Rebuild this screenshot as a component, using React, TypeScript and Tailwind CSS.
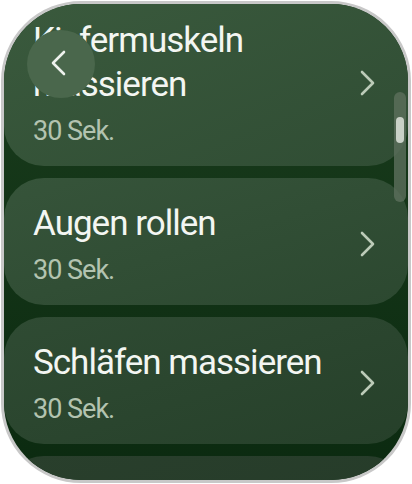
const items = [
  { title: "Kiefermuskeln massieren", time: "30 Sek.", bg: "from-[#3a5a3d] to-[#304d34]" },
  { title: "Augen rollen", time: "30 Sek.", bg: "from-[#36543a] to-[#2c4830]" },
  { title: "Schläfen massieren", time: "30 Sek.", bg: "from-[#2f4b33] to-[#26402a]" },
];

const Chevron = ({ dir }: { dir: "left" | "right" }) => (
  <svg width="16" height="28" viewBox="0 0 16 28" fill="none">
    <polyline
      points={dir === "right" ? "3,3 14,14 3,25" : "13,3 2,14 13,25"}
      stroke="currentColor"
      strokeWidth="2.6"
      strokeLinecap="round"
      strokeLinejoin="round"
    />
  </svg>
);

export default function App() {
  return (
    <div className="w-[412px] h-[484px] bg-white p-[1px]" style={{ fontFamily: "Roboto, 'Noto Sans', sans-serif" }}>
      <div className="relative h-full w-full overflow-hidden rounded-[80px] border-[3px] border-[#c8c8c8] bg-gradient-to-b from-[#1b3e1e] to-[#0b2a10]">
        {/* list */}
        <div className="-mt-[9px] flex flex-col gap-[12px]">
          {items.map((it) => (
            <div
              key={it.title}
              className={`flex items-center justify-between rounded-[40px] bg-gradient-to-br ${it.bg} pl-[29px] pr-[33px] pt-[24px] pb-[19px]`}
            >
              <div className="w-[318px]">
                <div className="text-[35px] leading-[44px] tracking-[-1px] text-[#f3f6f2]">{it.title}</div>
                <div className="mt-[8px] text-[27px] leading-[32px] tracking-[-1px] text-[#b3c3b0]">{it.time}</div>
              </div>
              <div className="text-[#bccbb8]">
                <Chevron dir="right" />
              </div>
            </div>
          ))}
          {/* next item, scrolled below the screen edge */}
          <div className="h-[127px] rounded-[40px] bg-gradient-to-br from-[#293f2c] to-[#243a28]" />
        </div>

        {/* back button */}
        <div className="absolute left-[23px] top-[26px] flex h-[68px] w-[68px] items-center justify-center rounded-full bg-[#4a674c] text-[#eef2ed]">
          <div className="-ml-[4px] -mt-[3px]">
            <Chevron dir="left" />
          </div>
        </div>

        {/* scrollbar */}
        <div className="absolute right-[2px] top-[88px] h-[110px] w-[12px] rounded-full bg-[#5d6f5d]/80">
          <div className="ml-[2px] mt-[25px] h-[26px] w-[8px] rounded-full bg-[#c9d1c7]" />
        </div>
      </div>
    </div>
  );
}
